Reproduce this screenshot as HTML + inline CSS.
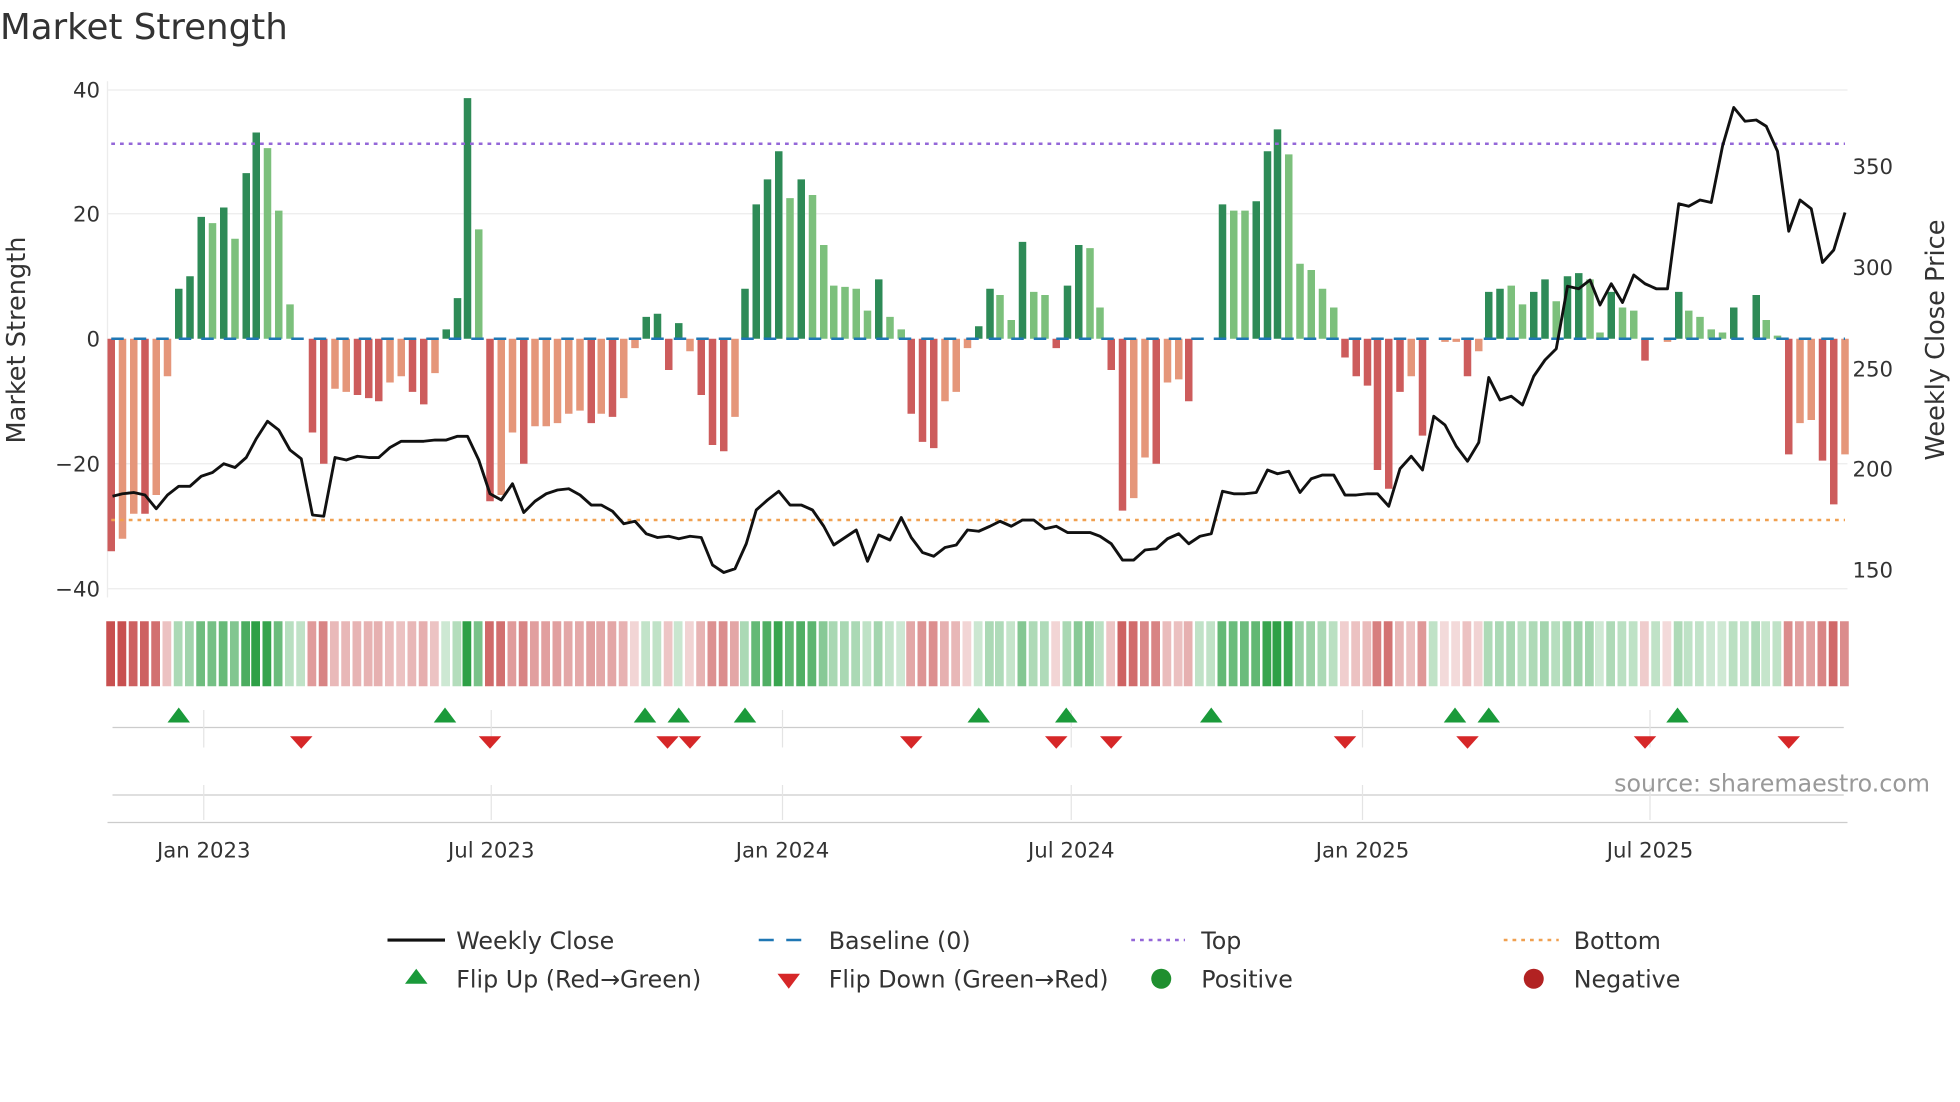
<!DOCTYPE html>
<html><head><meta charset="utf-8"><style>
html,body{margin:0;padding:0;background:#fff;width:1960px;height:1102px;overflow:hidden}
svg{display:block}
text{font-family:"DejaVu Sans","Liberation Sans",sans-serif;fill:#333}
</style></head><body>
<svg id="s" width="1960" height="1102" viewBox="0 0 1568 881.6" xmlns="http://www.w3.org/2000/svg">
<text x="0" y="31" font-size="28.5">Market Strength</text>
<g stroke="#ececec" stroke-width="1">
<line x1="86" y1="72" x2="1478" y2="72"/><line x1="86" y1="171" x2="1478" y2="171"/>
<line x1="86" y1="371" x2="1478" y2="371"/><line x1="86" y1="471" x2="1478" y2="471"/>
<line x1="86" y1="65" x2="86" y2="478"/>
</g>
<g font-size="17" text-anchor="end">
<text x="80" y="78">40</text><text x="80" y="177">20</text><text x="80" y="277">0</text>
<text x="80" y="377">−20</text><text x="80" y="477">−40</text>
</g>
<g font-size="17">
<text x="1482" y="139">350</text><text x="1482" y="220">300</text><text x="1482" y="301">250</text>
<text x="1482" y="381">200</text><text x="1482" y="462">150</text>
</g>
<text font-size="20.5" transform="translate(20,272) rotate(-90)" text-anchor="middle">Market Strength</text>
<text font-size="20.5" transform="translate(1555,272) rotate(-90)" text-anchor="middle">Weekly Close Price</text>
<g id="bars"></g>
<g id="heat"></g>
<line x1="89" y1="271" x2="1476" y2="271" stroke="#1f77b4" stroke-width="2" stroke-dasharray="10,8"/>
<line x1="89" y1="115" x2="1476" y2="115" stroke="#9467d8" stroke-width="2" stroke-dasharray="3,4"/>
<line x1="89" y1="416" x2="1476" y2="416" stroke="#f0a050" stroke-width="2" stroke-dasharray="3,4"/>
<polyline id="price" fill="none" stroke="#111" stroke-width="2.3" stroke-linejoin="round"/>
<g stroke="#ddd" stroke-width="1">
<line x1="90" y1="582" x2="1475" y2="582" stroke="#ccc"/>
<line x1="90" y1="636" x2="1475" y2="636" stroke="#ccc"/>
<line x1="86" y1="658" x2="1478" y2="658" stroke="#ccc"/>
</g>
<g id="ticks" stroke="#e4e4e4"></g>
<g id="flips"></g>
<g font-size="17" text-anchor="middle">
<text x="163" y="686">Jan 2023</text><text x="393" y="686">Jul 2023</text><text x="626" y="686">Jan 2024</text>
<text x="857" y="686">Jul 2024</text><text x="1090" y="686">Jan 2025</text><text x="1320" y="686">Jul 2025</text>
</g>
<text x="1544" y="633" font-size="19" text-anchor="end" style="fill:#999">source: sharemaestro.com</text>
<g font-size="19">
<line x1="310" y1="752" x2="356" y2="752" stroke="#111" stroke-width="2.5"/><text x="365" y="759">Weekly Close</text>
<line x1="607" y1="752" x2="650" y2="752" stroke="#1f77b4" stroke-width="2" stroke-dasharray="12,10"/><text x="663" y="759">Baseline (0)</text>
<line x1="905" y1="752" x2="948" y2="752" stroke="#9467d8" stroke-width="2" stroke-dasharray="3,4"/><text x="961" y="759">Top</text>
<line x1="1203" y1="752" x2="1247" y2="752" stroke="#f0a050" stroke-width="2" stroke-dasharray="3,4"/><text x="1259" y="759">Bottom</text>
<polygon points="333,775 342,787 324,787" fill="#1a9a3a"/><text x="365" y="790">Flip Up (Red→Green)</text>
<polygon points="622,779 640,779 631,791" fill="#d62728"/><text x="663" y="790">Flip Down (Green→Red)</text>
<circle cx="929" cy="783" r="8" fill="#1f8f2f"/><text x="961" y="790">Positive</text>
<circle cx="1227" cy="783" r="8" fill="#b22222"/><text x="1259" y="790">Negative</text>
</g>
</svg>
<script>
var B=[[89,-34,1],[98,-32,0],[107,-28,0],[116,-28,1],[125,-25,0],[134,-6,0],[143,8,1],[152,10,1],[161,19.5,1],[170,18.5,0],[179,21,1],[188,16,0],[197,26.5,1],[205,33,1],[214,30.5,0],[223,20.5,0],[232,5.5,0],[241,0,0],[250,-15,1],[259,-20,1],[268,-8,0],[277,-8.5,0],[286,-9,1],[295,-9.5,1],[303,-10,1],[312,-7,0],[321,-6,0],[330,-8.5,1],[339,-10.5,1],[348,-5.5,0],[357,1.5,1],[366,6.5,1],[374,38.5,1],[383,17.5,0],[392,-26,1],[401,-25,0],[410,-15,0],[419,-20,1],[428,-14,0],[437,-14,0],[446,-13.5,0],[455,-12,0],[464,-11.5,0],[473,-13.5,1],[481,-12,0],[490,-12.5,1],[499,-9.5,0],[508,-1.5,0],[517,3.5,1],[526,4,1],[535,-5,1],[543,2.5,1],[552,-2,0],[561,-9,1],[570,-17,1],[579,-18,1],[588,-12.5,0],[596,8,1],[605,21.5,1],[614,25.5,1],[623,30,1],[632,22.5,0],[641,25.5,1],[650,23,0],[659,15,0],[667,8.5,0],[676,8.3,0],[685,8,0],[694,4.5,0],[703,9.5,1],[712,3.5,0],[721,1.5,0],[729,-12,1],[738,-16.5,1],[747,-17.5,1],[756,-10,0],[765,-8.5,0],[774,-1.5,0],[783,2,1],[792,8,1],[800,7,0],[809,3,0],[818,15.5,1],[827,7.5,0],[836,7,0],[845,-1.5,1],[854,8.5,1],[863,15,1],[872,14.5,0],[880,5,0],[889,-5,1],[898,-27.5,1],[907,-25.5,0],[916,-19,0],[925,-20,1],[934,-7,0],[943,-6.5,0],[951,-10,1],[960,0,0],[969,0,0],[978,21.5,1],[987,20.5,0],[996,20.5,0],[1005,22,1],[1014,30,1],[1022,33.5,1],[1031,29.5,0],[1040,12,0],[1049,11,0],[1058,8,0],[1067,5,0],[1076,-3,1],[1085,-6,1],[1094,-7.5,1],[1102,-21,1],[1111,-24,1],[1120,-8.5,1],[1129,-6,0],[1138,-15.5,1],[1147,0,0],[1156,-0.5,0],[1165,-0.5,0],[1174,-6,1],[1183,-2,0],[1191,7.5,1],[1200,8,1],[1209,8.5,0],[1218,5.5,0],[1227,7.5,1],[1236,9.5,1],[1245,6,0],[1254,10,1],[1263,10.5,1],[1272,9.5,0],[1280,1,0],[1289,7.5,1],[1298,5,0],[1307,4.5,0],[1316,-3.5,1],[1325,0,0],[1334,-0.5,0],[1343,7.5,1],[1351,4.5,0],[1360,3.5,0],[1369,1.5,0],[1378,1,0],[1387,5,1],[1396,0,0],[1405,7,1],[1413,3,0],[1422,0.5,0],[1431,-18.5,1],[1440,-13.5,0],[1449,-13,0],[1458,-19.5,1],[1467,-26.5,1],[1476,-18.5,0]];
var NS="http://www.w3.org/2000/svg";
function el(t,a,p){var e=document.createElementNS(NS,t);for(var k in a)e.setAttribute(k,a[k]);document.getElementById(p).appendChild(e);return e}
for(var i=0;i<B.length;i++){var x=B[i][0],v=B[i][1],d=B[i][2];
 var c=v>=0?(d?"#2e8b57":"#7cc07c"):(d?"#cd5c5c":"#e5967a");
 var y=v>=0?271-v*5:271,h=Math.abs(v)*5;
 if(h>0)el("rect",{x:x-3,y:y,width:6,height:h,fill:c},"bars");
 var a=Math.min(1,0.2+0.8*Math.abs(v)/32);
 var hc=v>=0?"rgba(46,160,70,"+a.toFixed(2)+")":"rgba(200,80,80,"+a.toFixed(2)+")";
 if(v>=0&&v<1)hc="rgba(46,160,70,0.3)";
 el("rect",{x:x-4,y:497,width:7,height:52,fill:hc},"heat");}
var P="90,397 98,395 107,394 116,396 125,407 134,396 143,389 152,389 161,381 170,378 179,371 188,374 197,366 205,351 214,337 223,344 232,360 241,367 250,412 259,413 268,366 277,368 286,365 295,366 303,366 312,358 321,353 330,353 339,353 348,352 357,352 366,349 374,349 383,368 392,395 401,400 410,387 419,410 428,401 437,395 446,392 455,391 464,396 473,404 481,404 490,409 499,419 508,417 517,427 526,430 535,429 543,431 552,429 561,430 570,452 579,458 588,455 597,435 605,408 614,400 623,393 632,404 641,404 650,408 659,421 667,436 676,430 685,424 694,449 703,428 712,432 721,414 729,430 738,442 747,445 756,438 765,436 774,424 783,425 792,421 800,417 809,421 818,416 827,416 836,423 845,421 854,426 863,426 872,426 880,429 889,435 898,448 907,448 916,440 925,439 934,431 943,427 951,435 960,429 969,427 978,393 987,395 996,395 1005,394 1014,376 1022,379 1031,377 1040,394 1049,383 1058,380 1067,380 1076,396 1085,396 1094,395 1102,395 1111,405 1120,375 1129,365 1138,376 1147,333 1156,340 1165,357 1174,369 1183,354 1191,302 1200,320 1209,317 1218,324 1227,301 1236,288 1245,279 1254,229 1263,231 1272,224 1280,244 1289,227 1298,242 1307,220 1316,227 1325,231 1334,231 1343,163 1351,165 1360,160 1369,162 1378,117 1387,86 1396,97 1405,96 1413,101 1422,121 1431,185 1440,160 1449,167 1458,210 1467,200 1476,170";
document.getElementById("price").setAttribute("points",P);
[163,393,626,857,1090,1320].forEach(function(x){el("line",{x1:x,y1:568,x2:x,y2:598},"ticks");el("line",{x1:x,y1:628,x2:x,y2:656},"ticks");});
[143,356,516,543,596,783,853,969,1164,1191,1342].forEach(function(x){el("polygon",{points:(x)+",566 "+(x+9)+",578 "+(x-9)+",578",fill:"#1a9a3a"},"flips");});
[241,392,534,552,729,845,889,1076,1174,1316,1431].forEach(function(x){el("polygon",{points:(x-9)+",589 "+(x+9)+",589 "+x+",599",fill:"#d62728"},"flips");});
</script>
</body></html>
